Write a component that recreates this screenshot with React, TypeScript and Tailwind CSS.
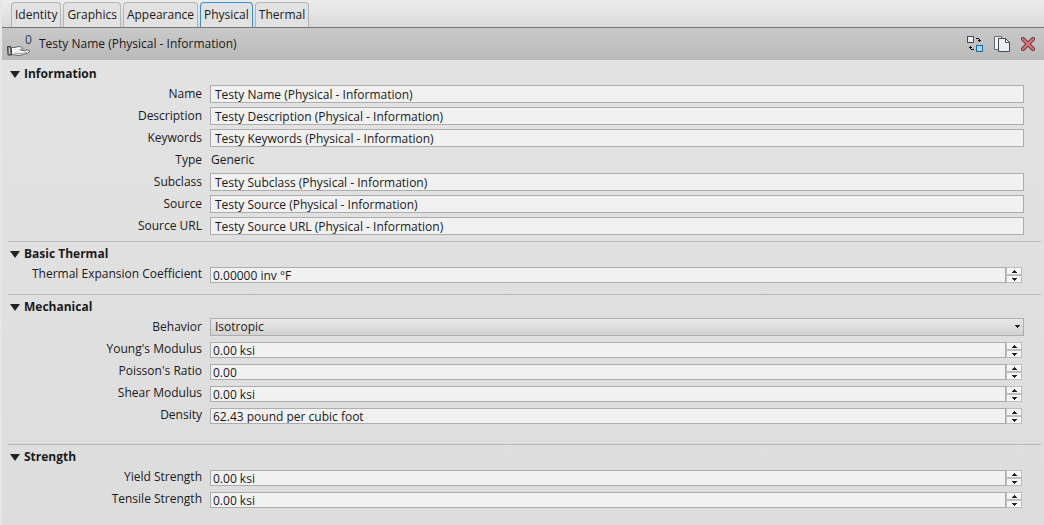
import { useId, useState, type ReactNode } from "react";
import clsx from "clsx";

const TABS = ["Identity", "Graphics", "Appearance", "Physical", "Thermal"];

function HandIcon() {
  return (
    <svg width="24" height="10" viewBox="0 0 24 10" aria-hidden="true">
      <path d="M4.500 1.500L8 1.500 11 .5 14.500 1 16 2.500 13 4l3 .5 5-.5 2 1-2 2-4.500 1.500L12 9.500 8 9 4.500 8.500z" fill="#ededed" stroke="#6a6a6a" strokeLinejoin="round" />
      <path d="M5 2.500h6l3-.5M6 4.500h6l4 1.500h5" fill="none" stroke="#fff" />
      <path d="M8 7.500h7l5-1.500" fill="none" stroke="#a9a9a9" />
      <path d="M.5.500h3l1 8.500H1z" fill="#8a8a8a" stroke="#3c3c3c" strokeLinejoin="round" />
      <path d="M2.500 2v6" stroke="#cfcfcf" />
    </svg>
  );
}

function ReplaceIcon() {
  return (
    <svg width="16" height="16" viewBox="0 0 16 16" aria-hidden="true" shapeRendering="crispEdges">
      <rect x=".5" y=".5" width="6" height="6" fill="#e9ebf2" stroke="#454b59" />
      <rect x="9.500" y="9.500" width="6" height="6" fill="#a9d5f2" stroke="#1567b0" />
      <path d="M9 2h3v1h1v1h1v1h-1v1h-1v-1h-1v-1h1v-1h-3zM7 14h-3v-1h-1v-1h-1v-1h1v-1h1v1h1v1h-1v1h3z" fill="#111" />
    </svg>
  );
}

function CopyIcon() {
  return (
    <svg width="16" height="16" viewBox="0 0 16 16" aria-hidden="true">
      <path d="M.5.5h7v2h-3v11h-4z" fill="#f3f4f7" stroke="#666a74" />
      <path d="M4.500 2.500h7l4 4v9h-11z" fill="#eceef4" stroke="#454a57" />
      <path d="M11.500 2.500v4h4z" fill="#fff" stroke="#454a57" strokeLinejoin="round" />
    </svg>
  );
}

function DeleteIcon() {
  return (
    <svg width="14" height="14" viewBox="0 0 14 14" aria-hidden="true">
      <path d="M2 2l10 10M12 2L2 12" stroke="#54424a" strokeWidth="4" strokeLinecap="round" />
      <path d="M2 2l10 10M12 2L2 12" stroke="#f27070" strokeWidth="2" strokeLinecap="round" />
    </svg>
  );
}

function ArrowUp() {
  return (
    <svg width="5" height="3" viewBox="0 0 5 3" aria-hidden="true" shapeRendering="crispEdges">
      <path d="M2 0h1v1h1v1h1v1H0V2h1V1h1z" fill="#222" />
    </svg>
  );
}

function ArrowDown({ className }: { className?: string }) {
  return (
    <svg width="5" height="3" viewBox="0 0 5 3" aria-hidden="true" shapeRendering="crispEdges" className={className}>
      <path d="M0 0h5v1H4v1H3v1H2V2H1V1H0z" fill="#222" />
    </svg>
  );
}

function Section({ title, className, children }: { title: string; className?: string; children: ReactNode }) {
  const [open, setOpen] = useState(true);
  return (
    <section className={clsx("mr-[3px] ml-1.5", className)}>
      <h2>
        <button
          type="button"
          aria-expanded={open}
          onClick={() => setOpen(!open)}
          className="flex h-[18px] items-center gap-1 pl-0.5 font-bold"
        >
          <svg width="10" height="7" viewBox="0 0 10 7" aria-hidden="true" className={open ? "" : "-rotate-90"}>
            <path d="M0 0h10L5 7z" fill="#222" />
          </svg>
          {title}
        </button>
      </h2>
      {open && children}
    </section>
  );
}

const ROW = "flex h-[22px] items-center gap-2 pr-[17px]";
const LABEL = "w-[194px] shrink-0 text-right leading-4 pb-px";
const SPIN_BUTTON = "flex h-2 items-center justify-center border border-[#bdbdbd] bg-[#f8f8f8]";

function TextRow({ label, value }: { label: string; value: string }) {
  const id = useId();
  return (
    <div className={ROW}>
      <label htmlFor={id} className={LABEL}>{label}</label>
      <input
        id={id}
        type="text"
        defaultValue={value}
        className="h-[18px] min-w-0 flex-1 border border-[#adadad] bg-[#f1f1f1] px-1 pt-px outline-none"
      />
    </div>
  );
}

function NumberRow({ label, value }: { label: string; value: string }) {
  const id = useId();
  return (
    <div className={ROW}>
      <label htmlFor={id} className="w-[194px] shrink-0 pb-0.5 text-right leading-4">{label}</label>
      <div className="mr-0.5 flex h-4 min-w-0 flex-1">
        <input
          id={id}
          type="text"
          inputMode="decimal"
          defaultValue={value}
          className="h-4 min-w-0 flex-1 border border-[#adadad] bg-[#f1f1f1] px-0.5 pt-px outline-none"
        />
        <div className="flex w-4 flex-col">
          <button type="button" aria-label={`Increase ${label}`} className={SPIN_BUTTON}>
            <ArrowUp />
          </button>
          <button type="button" aria-label={`Decrease ${label}`} className={SPIN_BUTTON}>
            <ArrowDown />
          </button>
        </div>
      </div>
    </div>
  );
}

export default function App() {
  const [tab, setTab] = useState("Physical");
  return (
    <div className="min-h-screen bg-[#e6e6e6] pl-0.5 font-['Open_Sans',sans-serif] text-[12px] text-[#1a1a1a]">
      <div className="flex min-h-screen flex-col bg-linear-to-b from-[#e3e3e3] to-[#dddddd]">
        <div role="tablist" className="flex h-7 items-end gap-0.5 border-b border-[#757575] bg-linear-to-b from-[#ececec] to-[#dadada] pl-[9px]">
          {TABS.map((name) => (
            <button
              key={name}
              type="button"
              role="tab"
              aria-selected={name === tab}
              onClick={() => setTab(name)}
              className={clsx(
                "h-[25px] rounded-t-sm border border-b-0 bg-[#e2e2e2] px-[3px]",
                name === tab ? "border-[#3a8fd6]" : "border-[#b4b4b4]",
              )}
            >
              {name}
            </button>
          ))}
        </div>

        <header className="flex h-8 items-center bg-linear-to-b from-[#c9c9c9] to-[#bababa] pr-[9px] pl-[5px]">
          <div className="relative flex h-8 w-8 items-end pb-1">
            <HandIcon />
            <span className="absolute top-1 left-[18px] leading-4 text-[#24435f]">0</span>
          </div>
          <h1 className="flex-1">Testy Name (Physical - Information)</h1>
          <div className="flex items-center gap-[11px]">
            <button type="button" aria-label="Replace asset"><ReplaceIcon /></button>
            <button type="button" aria-label="Duplicate asset"><CopyIcon /></button>
            <button type="button" aria-label="Delete asset"><DeleteIcon /></button>
          </div>
        </header>

        <main>
          <Section title="Information" className="pt-[5px] pb-1">
            <TextRow label="Name" value="Testy Name (Physical - Information)" />
            <TextRow label="Description" value="Testy Description (Physical - Information)" />
            <TextRow label="Keywords" value="Testy Keywords (Physical - Information)" />
            <div className={ROW}>
              <span className={LABEL}>Type</span>
              <span className="pb-px pl-px leading-4">Generic</span>
            </div>
            <TextRow label="Subclass" value="Testy Subclass (Physical - Information)" />
            <TextRow label="Source" value="Testy Source (Physical - Information)" />
            <TextRow label="Source URL" value="Testy Source URL (Physical - Information)" />
          </Section>

          <Section title="Basic Thermal" className="border-t border-[#b9b9b9] pt-[3px] pb-2">
            <div className="pt-px">
              <NumberRow label="Thermal Expansion Coefficient" value="0.00000 inv °F" />
            </div>
          </Section>

          <Section title="Mechanical" className="border-t border-[#b9b9b9] pt-[3px] pb-[17px]">
            <div className={ROW}>
              <label htmlFor="behavior" className={LABEL}>Behavior</label>
              <div className="relative flex h-[18px] min-w-0 flex-1">
                <select
                  id="behavior"
                  defaultValue="Isotropic"
                  className="h-[18px] w-full appearance-none border border-[#adadad] bg-linear-to-b from-[#e9e9e9] to-[#d2d2d2] px-1 leading-4 outline-none"
                >
                  <option>Isotropic</option>
                  <option>Orthotropic</option>
                  <option>Transverse Isotropic</option>
                </select>
                <ArrowDown className="pointer-events-none absolute top-[7px] right-1" />
              </div>
            </div>
            <div className="pt-px">
              <NumberRow label="Young's Modulus" value="0.00 ksi" />
              <NumberRow label="Poisson's Ratio" value="0.00" />
              <NumberRow label="Shear Modulus" value="0.00 ksi" />
              <NumberRow label="Density" value="62.43 pound per cubic foot" />
            </div>
          </Section>

          <Section title="Strength" className="border-t border-[#b9b9b9] pt-[3px] pb-2">
            <div className="pt-px">
              <NumberRow label="Yield Strength" value="0.00 ksi" />
              <NumberRow label="Tensile Strength" value="0.00 ksi" />
            </div>
          </Section>
        </main>
      </div>
    </div>
  );
}
